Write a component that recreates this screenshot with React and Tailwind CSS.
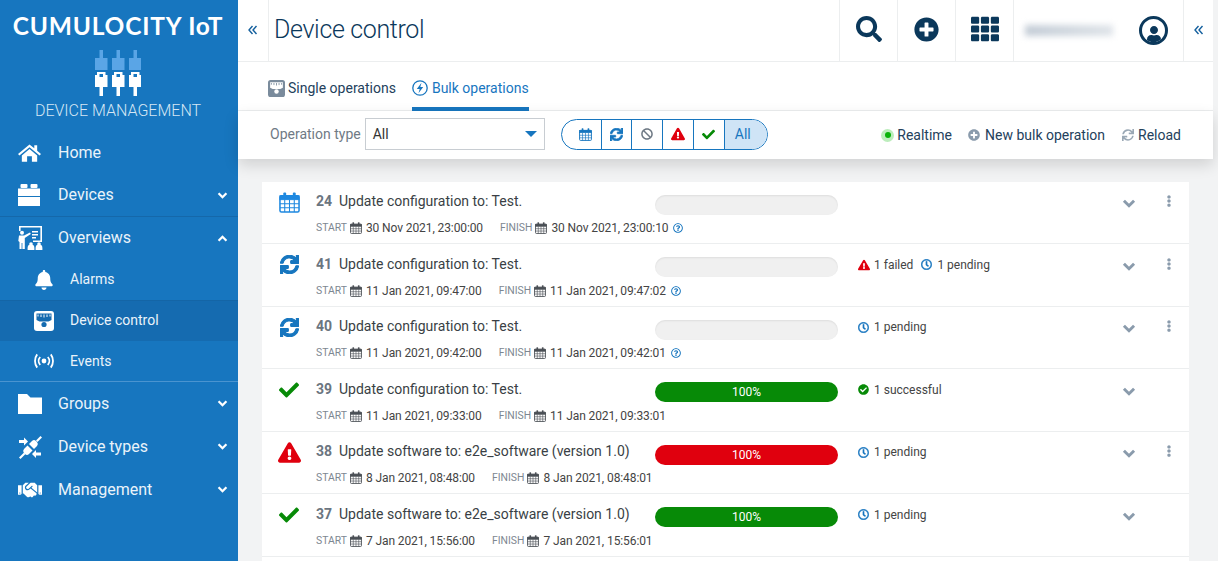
import React from "react";
import { FaSearch, FaPlusCircle, FaTh, FaHandshake, FaSync, FaCheck, FaExclamationTriangle, FaBan, FaEllipsisV, FaCheckCircle, FaRegClock, FaRegQuestionCircle, FaBell, FaUser } from "react-icons/fa";

const Chevron = ({ up, className }) => (
  <svg viewBox="0 0 12 8" className={className} fill="none" stroke="currentColor" strokeWidth="2.6">
    <polyline points={up ? "1.5,6.5 6,2 10.5,6.5" : "1.5,1.5 6,6 10.5,1.5"} />
  </svg>
);

const DoubleLeft = () => (
  <svg viewBox="0 0 10 10" className="w-[10px] h-[10px] -mt-[2px] text-[#14609e]" fill="none" stroke="currentColor" strokeWidth="1.4">
    <polyline points="4.5,1 1,5 4.5,9" />
    <polyline points="8.5,1 5,5 8.5,9" />
  </svg>
);

// calendar with grid, used big (status) and small (dates)
const Calendar = ({ className }) => (
  <svg viewBox="0 0 22 22" className={`shrink-0 ${className}`} fill="none" stroke="currentColor">
    <rect x="1" y="4" width="20" height="17" rx="1.5" strokeWidth="1.6" />
    <rect x="1" y="4" width="20" height="4" fill="currentColor" strokeWidth="1" />
    <rect x="4.5" y="0.5" width="3" height="5" rx="1" fill="currentColor" stroke="none" />
    <rect x="14.5" y="0.5" width="3" height="5" rx="1" fill="currentColor" stroke="none" />
    <path d="M6 8v13M11 8v13M16 8v13M1 12.3h20M1 16.6h20" strokeWidth="1.1" />
  </svg>
);

const Gauge = ({ className, dark }) => (
  <svg viewBox="0 0 20 20" className={className}>
    <rect x="0" y="0" width="20" height="20" rx="3" fill="currentColor" />
    <path d="M2.5 2.500h15V9l-3 1.500h-9L2.500 9z" fill={dark} />
    <path d="M4 3.500v2M7 3.500v2.500M10 3.500v3M13 3.500v2.500M16 3.500v2" stroke="currentColor" strokeWidth="1" />
    <circle cx="10" cy="13.500" r="2.600" fill={dark} />
  </svg>
);

const PlugLogo = () => (
  <svg viewBox="0 0 46 46" className="w-[46px] h-[46px]">
    {[0, 17, 34].map((x) => (
      <g key={x}>
        <rect x={x + 4.5} y="0" width="3.5" height="9" fill="#5aa5e6" />
        <rect x={x} y="8" width="12.5" height="12" fill="#5aa5e6" />
        <path d={`M${x + 2} 25v-3h8.5v3h2v12h-4.5v9h-3.5v-9h-4.5v-12z`} fill="#fff" />
        <rect x={x + 4.5} y="24" width="3.5" height="3" fill="#1776bf" />
      </g>
    ))}
  </svg>
);

const HomeIcon = () => (
  <svg viewBox="0 0 24 18" className="w-[23px] h-[18px]" fill="#fff">
    <path d="M12 0L0 10l1.500 1.700L12 3l10.500 8.700L24 10l-4-3.400V1h-3v3z" />
    <path d="M4 11.500L12 4.700l8 6.800V18h-5.500v-5.500h-5V18H4z" />
  </svg>
);

const FolderIcon = () => (
  <svg viewBox="0 0 24 20" className="w-[24px] h-[20px]" fill="#fff">
    <path d="M0 0h9l3.500 3.500H24V20H0z" />
  </svg>
);

const Lego = () => (
  <svg viewBox="0 0 22 22" className="w-[22px] h-[22px]" fill="#fff">
    <rect x="2.5" y="0" width="7" height="4" rx="1" />
    <rect x="12.5" y="0" width="7" height="4" rx="1" />
    <rect x="0" y="4.5" width="22" height="7.5" />
    <rect x="0" y="13" width="22" height="9" />
  </svg>
);

const Presenter = () => (
  <svg viewBox="0 0 25 24" className="w-[25px] h-[24px]" fill="#fff">
    <path d="M1 0h23v16h-9v-1.6h7.4V1.6H2.6V5H1z" />
    <circle cx="4" cy="6.8" r="2" />
    <path d="M1 9.5h5l6-3 .8 1.4-6 4V23H4.4v-6H3.6v6H1.500v-7L.3 15z" />
    <path d="M14 5h6v1.4h-6zM14 8h6v1.4h-6zM14 11h4v1.4h-4z" />
    <circle cx="13" cy="18" r="1.8" />
    <path d="M9.6 24v-2a3 3 0 0 1 6.8 0v2z" />
    <circle cx="21" cy="18" r="1.8" />
    <path d="M17.6 24v-2a3 3 0 0 1 6.8 0v2z" />
  </svg>
);

const Antenna = () => (
  <svg viewBox="0 0 20 16" className="w-[20px] h-[16px]" fill="none" stroke="#fff" strokeWidth="1.8">
    <circle cx="10" cy="8" r="2.4" fill="#fff" stroke="none" />
    <path d="M6.2 4a6 6 0 0 0 0 8M13.8 4a6 6 0 0 1 0 8M3.200 1.400a11 11 0 0 0 0 13.200M16.800 1.400a11 11 0 0 1 0 13.200" />
  </svg>
);

const Plugs = () => (
  <svg viewBox="0 0 24 24" className="w-[24px] h-[24px]" fill="#fff">
    <path d="M1 22.500l5-5 1.500 1.500-5 5z" />
    <path d="M6 14l3.500-3.500 5 5L11 19a3 3 0 0 1-4 0l-1-1a3 3 0 0 1 0-4z" />
    <path d="M11 9l3-3a3 3 0 0 1 4 0l1 1a3 3 0 0 1 0 4l-3 3z" />
    <path d="M18 5.500L22.500 1 24 2.500 19.500 7z" />
    <path d="M1 5h5V2.500L10 6.500l-4 4V8H1zM23 17.500h-5v-2.500l-4 4 4 4v-2.500h5z" />
  </svg>
);

const NavItem = ({ icon, label, chevron, up, className = "h-[43px]" }) => (
  <div className={`flex items-center text-[16px] text-[#eaf3fa] ${className}`}>
    <div className="w-[58px] pl-[18px] flex items-center">{icon}</div>
    <span className="flex-1">{label}</span>
    {chevron && <Chevron up={up} className="w-[11px] h-[7px] mr-[10px] text-white" />}
  </div>
);

const SubItem = ({ icon, label, active, className = "h-[41px]" }) => (
  <div className={`flex items-center text-[14px] text-[#eaf3fa] ${className} ${active ? "bg-[#156bb0] shadow-[inset_0_1px_0_#1465a6]" : ""}`}>
    <div className="w-[70px] pl-[34px] flex items-center">{icon}</div>
    <span>{label}</span>
  </div>
);

const Sidebar = () => (
  <aside className="w-[238px] shrink-0 bg-[#1776bf] flex flex-col">
    <div className="h-[132px] flex flex-col items-center pt-[10px] pr-[2px]">
      <div className="font-['Lato'] font-bold text-[24.500px] leading-[32px] tracking-[0.8px] text-white whitespace-nowrap">CUMULOCITY IoT</div>
      <div className="mt-[8px]"><PlugLogo /></div>
      <div className="font-light text-[16px] leading-[20px] mt-[5px] text-[#d5e6f4]">DEVICE MANAGEMENT</div>
    </div>
    <NavItem icon={<HomeIcon />} label="Home" className="h-[42px]" />
    <NavItem icon={<Lego />} label="Devices" chevron className="h-[42px]" />
    <div className="border-t border-[#1568aa]">
      <NavItem icon={<Presenter />} label="Overviews" chevron up className="h-[42px]" />
      <SubItem icon={<FaBell className="text-white text-[20px]" />} label="Alarms" />
      <SubItem icon={<Gauge className="w-[20px] h-[20px] text-white" dark="#156bb0" />} label="Device control" active />
      <SubItem icon={<Antenna />} label="Events" className="h-[40px]" />
    </div>
    <div className="border-t border-[#4a94d0]">
      <NavItem icon={<FolderIcon />} label="Groups" chevron />
      <NavItem icon={<Plugs />} label="Device types" chevron />
      <NavItem icon={<FaHandshake className="text-white text-[24px]" />} label="Management" chevron />
    </div>
  </aside>
);

const HeaderCell = ({ children }) => (
  <div className="w-[58px] h-full border-l border-[#eceeef] flex items-center justify-center pb-[3px] text-[#0b385b]">{children}</div>
);

const Header = () => (
  <header className="h-[62px] flex items-stretch border-b border-[#eceeef] bg-white">
    <div className="w-[31px] border-r border-[#eceeef] flex items-center justify-center"><DoubleLeft /></div>
    <h1 className="flex-1 pl-[5px] text-[25px] font-light leading-[60px] tracking-[-0.35px] text-[#0b385b]">Device control</h1>
    <HeaderCell><FaSearch className="text-[26px]" /></HeaderCell>
    <HeaderCell><FaPlusCircle className="text-[25px]" /></HeaderCell>
    <HeaderCell><FaTh className="text-[28px]" /></HeaderCell>
    <div className="w-[170px] border-l border-[#eceeef] flex items-center pl-[11px] pr-[15px] pb-[1px] justify-between">
      <div className="w-[88px] h-[11px] bg-linear-to-r from-[#c3ccd6] to-[#dfe4e9] blur-[3px]" />
      <div className="w-[29px] h-[29px] rounded-full border-[3px] border-[#0b385b] flex items-end justify-center overflow-hidden">
        <FaUser className="text-[#0b385b] text-[16px]" />
      </div>
    </div>
    <div className="w-[30px] border-l border-[#eceeef] flex items-center justify-center"><DoubleLeft /></div>
  </header>
);

const Tabs = () => (
  <div className="h-[49px] flex items-stretch pl-[30px] gap-[16px] border-b border-[#eceeef] bg-white text-[14px]">
    <div className="flex items-center gap-[3px] pt-[5px] text-[#24415c]">
      <Gauge className="w-[17px] h-[17px] text-[#7a8b9c]" dark="#ffffff" />
      <span>Single operations</span>
    </div>
    <div className="flex items-center gap-[4px] pt-[7px] text-[#1776bf] border-b-[4px] border-[#1776bf] -mb-px">
      <svg viewBox="0 0 16 16" className="w-[16px] h-[16px]" fill="none" stroke="currentColor" strokeWidth="1.3">
        <circle cx="8" cy="8" r="7.2" />
        <path d="M9.500 2.800L4.800 9H7.700l-1.200 4.200L11.200 7H8.300z" fill="currentColor" stroke="none" />
      </svg>
      <span>Bulk operations</span>
    </div>
  </div>
);

const Seg = ({ children, first, active }) => (
  <div className={`flex items-center justify-center h-full border-r border-[#1776bf] last:border-r-0 ${first ? "w-[40px] pl-[8px]" : active ? "w-[42px] bg-[#cfe4f6] text-[#1776bf] text-[14px] pr-[6px]" : "w-[31px]"}`}>{children}</div>
);

const FilterBar = () => (
  <div className="h-[48px] flex items-center bg-white pl-[32px] pr-[32px] text-[14px] shadow-[0_6px_14px_rgba(0,0,0,0.14)] relative">
    <span className="text-[#6f7a85] mr-[4px] mb-[2px]">Operation type</span>
    <div className="w-[180px] h-[32px] mb-[2px] border border-[#c8cdd2] flex items-center justify-between pl-[7px] pr-[7px] text-[#333]">
      <span>All</span>
      <span className="w-0 h-0 border-x-[6px] border-x-transparent border-t-[6px] border-t-[#1776bf]" />
    </div>
    <div className="ml-[16px] mb-[2px] h-[31px] w-[207px] rounded-full border border-[#1776bf] flex items-stretch overflow-hidden">
      <Seg first><Calendar className="w-[13px] h-[13px] text-[#1776bf]" /></Seg>
      <Seg><FaSync className="text-[#1776bf] text-[13px] stroke-current stroke-[30px]" /></Seg>
      <Seg><FaBan className="text-[#6f7a85] text-[12px]" /></Seg>
      <Seg><FaExclamationTriangle className="text-[#e0000e] text-[14px]" /></Seg>
      <Seg><FaCheck className="text-[#078a07] text-[13px]" /></Seg>
      <Seg active>All</Seg>
    </div>
    <div className="flex-1" />
    <div className="flex items-center text-[#24415c]">
      <span className="w-[13px] h-[13px] rounded-full bg-[#bcedbc] flex items-center justify-center mr-[3px]">
        <span className="w-[6px] h-[6px] rounded-full bg-[#0ab30a]" />
      </span>
      <span>Realtime</span>
      <FaPlusCircle className="ml-[16px] mr-[5px] text-[12px] text-[#8a9bac]" />
      <span>New bulk operation</span>
      <FaSync className="ml-[17px] mr-[4px] text-[12px] text-[#9aa8b5]" />
      <span>Reload</span>
    </div>
  </div>
);

const DateValue = ({ label, value, gap }) => (
  <span className={`flex items-center ${gap ? "ml-[17px]" : ""}`}>
    <span className="text-[10.400px] text-[#7d8791] mr-[3px]">{label}</span>
    <Calendar className="w-[12px] h-[12px] text-[#4a4f55] mr-[4px]" />
    <span className="text-[12px] tracking-[-0.1px] text-[#444]">{value}</span>
  </span>
);

const StatusIcon = ({ status }) => {
  if (status === "scheduled") return <Calendar className="w-[21px] h-[21px] text-[#1e88e0]" />;
  if (status === "running") return <FaSync className="text-[#1776bf] text-[19px] stroke-current stroke-[30px]" />;
  if (status === "ok") return <FaCheck className="text-[#078a07] text-[20px]" />;
  return <FaExclamationTriangle className="text-[#e0000e] text-[23px]" />;
};

const Progress = ({ kind }) => {
  if (kind === "none") return <div className="w-[183px] h-[20px] rounded-full bg-[#f0f0f0] shadow-[inset_0_1px_2px_rgba(0,0,0,0.08)]" />;
  return (
    <div className={`w-[183px] h-[20px] rounded-full flex items-center justify-center text-white text-[12px] ${kind === "ok" ? "bg-[#078a07]" : "bg-[#e0000e]"}`}>100%</div>
  );
};

const Pending = () => (
  <span className="flex items-center gap-[5px]"><FaRegClock className="text-[#1776bf] text-[11px] stroke-current stroke-[20px]" />1 pending</span>
);

const rows = [
  { status: "scheduled", id: 24, title: "Update configuration to: Test.", start: "30 Nov 2021, 23:00:00", finish: "30 Nov 2021, 23:00:10", help: true, progress: "none", stats: [], kebab: true },
  { status: "running", id: 41, title: "Update configuration to: Test.", start: "11 Jan 2021, 09:47:00", finish: "11 Jan 2021, 09:47:02", help: true, progress: "none", stats: ["failed", "pending"], kebab: true },
  { status: "running", id: 40, title: "Update configuration to: Test.", start: "11 Jan 2021, 09:42:00", finish: "11 Jan 2021, 09:42:01", help: true, progress: "none", stats: ["pending"], kebab: true },
  { status: "ok", id: 39, title: "Update configuration to: Test.", start: "11 Jan 2021, 09:33:00", finish: "11 Jan 2021, 09:33:01", progress: "ok", stats: ["ok"] },
  { status: "failed", id: 38, title: "Update software to: e2e_software (version 1.0)", start: "8 Jan 2021, 08:48:00", finish: "8 Jan 2021, 08:48:01", progress: "failed", stats: ["pending"], kebab: true },
  { status: "ok", id: 37, title: "Update software to: e2e_software (version 1.0)", start: "7 Jan 2021, 15:56:00", finish: "7 Jan 2021, 15:56:01", progress: "ok", stats: ["pending"] },
];

const Row = ({ row }) => (
  <div className="h-[62.500px] pt-[0.5px] flex border-b border-[#eceeef] shrink-0">
    <div className="w-[54px] pt-[10px] h-[30px] flex items-center justify-center"><StatusIcon status={row.status} /></div>
    <div className="w-[339px] pt-[10px]">
      <div className="flex items-center h-[18px] text-[14px] leading-[18px]">
        <span className="font-bold text-[#6b7580] w-[23px]">{row.id}</span>
        <span className="text-[#3a3f45]">{row.title}</span>
      </div>
      <div className="flex items-center w-max mt-[9px] h-[18px] whitespace-nowrap">
        <DateValue label="START" value={row.start} />
        <DateValue label="FINISH" value={row.finish} gap />
        {row.help && <FaRegQuestionCircle className="ml-[5px] shrink-0 text-[10px] text-[#1776bf]" />}
      </div>
    </div>
    <div className="pt-[12.500px]"><Progress kind={row.progress} /></div>
    <div className="flex-1 ml-[20px] pt-[13px] h-[27px] flex items-center gap-[8px] text-[12px] text-[#444]">
      {row.stats.map((s) => {
        if (s === "failed") return <span key={s} className="flex items-center gap-[4px]"><FaExclamationTriangle className="text-[#e0000e] text-[12px]" />1 failed</span>;
        if (s === "ok") return <span key={s} className="flex items-center gap-[5px]"><FaCheckCircle className="text-[#078a07] text-[11px]" />1 successful</span>;
        return <Pending key={s} />;
      })}
    </div>
    <div className="w-[40px] pt-[17px] flex justify-center h-[30px]"><Chevron className="w-[14px] h-[9px] text-[#8a9bac]" /></div>
    <div className="w-[40px] pt-[13px] flex justify-center h-[27px]">
      {row.kebab && <FaEllipsisV className="text-[#8a9bac] text-[12px]" />}
    </div>
  </div>
);

const App = () => (
  <div className="h-[561px] w-[1218px] overflow-hidden flex bg-[#f2f3f4] font-['Roboto',sans-serif]">
    <Sidebar />
    <main className="flex-1 flex flex-col min-w-0">
      <div className="mr-[5px] relative z-10">
        <Header />
        <Tabs />
        <FilterBar />
      </div>
      <div className="mt-[22.500px] ml-[24px] mr-[29px] bg-white flex flex-col flex-1">
        {rows.map((row) => <Row key={row.id} row={row} />)}
      </div>
    </main>
  </div>
);

export default App;
